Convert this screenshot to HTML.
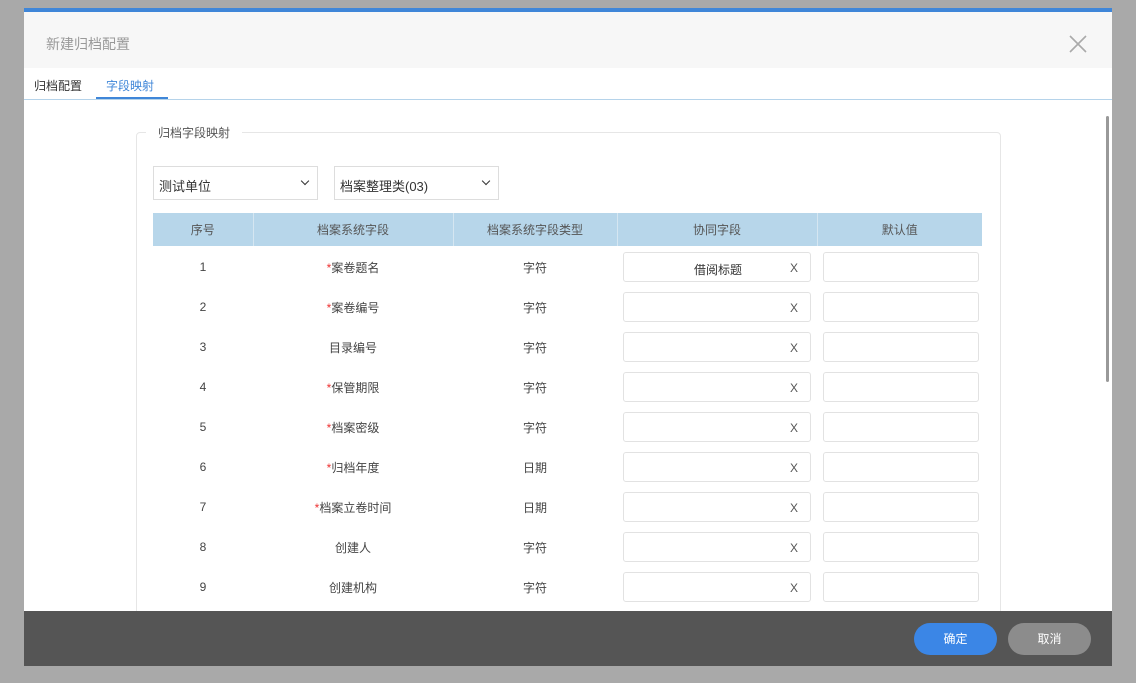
<!DOCTYPE html>
<html><head><meta charset="utf-8"><style>
*{box-sizing:border-box;margin:0;padding:0}
body{width:1136px;height:683px;background:#a9a9a9;font-family:"Liberation Sans","Noto Sans CJK SC",sans-serif;position:relative;overflow:hidden}
.dlg{position:absolute;left:24px;top:8px;width:1088px;height:658px;background:#fff;border-top:4px solid #3f86d8;overflow:hidden}
.hdr{height:56px;background:#f7f7f7;padding:22px 0 0 22px;font-size:14px;color:#999}
.close{position:absolute;right:24px;top:22px;width:20px;height:20px}
.tabs{height:32px;border-bottom:1px solid #b5d3ea;position:relative;font-size:12px}
.tabs span{position:absolute;top:9px}
.foot{position:absolute;left:0;bottom:0;width:100%;height:55px;background:#555}
.btn{position:absolute;top:12px;height:32px;width:83px;border-radius:16px;color:#fff;font-size:12px;text-align:center;line-height:32px}
.box{position:absolute;left:112px;top:120px;width:865px;height:520px;border:1px solid #e6e6e6;border-radius:4px}
.legend{position:absolute;left:122px;top:112px;background:#fff;padding:0 12px;font-size:12px;color:#555}
.sel{position:absolute;top:154px;height:34px;border:1px solid #ddd;font-size:13px;color:#333;padding:9px 5px}
.sel i{position:absolute;right:9px;top:11px;width:6px;height:6px;border-right:1.8px solid #333;border-bottom:1.8px solid #333;transform:rotate(45deg)}
table{position:absolute;left:129px;top:201px;border-collapse:collapse;font-size:12px;color:#444}
th{background:#b7d6ea;height:33px;font-weight:normal;border-right:1px solid #d5e6f1;color:#555}
td{height:40px;text-align:center;position:relative;padding-top:2px}
.r{color:#e33}
.in{position:absolute;top:6px;height:30px;border:1px solid #e2e2e2;border-radius:3px;background:#fff}
.in1{left:6px;width:188px}.in2{left:6px;width:156px}
.in1 b{position:absolute;right:12px;top:8px;font-weight:normal;color:#555}
.in1 em{position:absolute;left:70px;top:8px;font-style:normal;color:#333}
.scroll{position:absolute;right:3px;top:104px;width:3px;height:266px;background:#999;border-radius:2px}
</style></head><body>
<div class="dlg">
<div class="hdr">新建归档配置</div>
<svg class="close" viewBox="0 0 20 20"><path d="M2 2L18 18M18 2L2 18" stroke="#aaa" stroke-width="1.6"/></svg>
<div class="tabs"><span style="left:10px;color:#333">归档配置</span><span style="left:82px;color:#3f86d8">字段映射</span><div style="position:absolute;left:72px;top:29px;width:72px;height:2px;background:#3f86d8"></div></div>
<div class="scroll"></div>
<div class="box"></div>
<div class="legend">归档字段映射</div>
<div class="sel" style="left:129px;width:165px">测试单位<i></i></div>
<div class="sel" style="left:310px;width:165px">档案整理类(03)<i></i></div>
<table>
<tr><th style="width:100px">序号</th><th style="width:200px">档案系统字段</th><th style="width:164px">档案系统字段类型</th><th style="width:200px">协同字段</th><th style="width:165px;border-right:0">默认值</th></tr>
<tr><td>1</td><td><span class="r">*</span>案卷题名</td><td>字符</td><td><div class="in in1"><em>借阅标题</em><b>X</b></div></td><td><div class="in in2"></div></td></tr>
<tr><td>2</td><td><span class="r">*</span>案卷编号</td><td>字符</td><td><div class="in in1"><b>X</b></div></td><td><div class="in in2"></div></td></tr>
<tr><td>3</td><td>目录编号</td><td>字符</td><td><div class="in in1"><b>X</b></div></td><td><div class="in in2"></div></td></tr>
<tr><td>4</td><td><span class="r">*</span>保管期限</td><td>字符</td><td><div class="in in1"><b>X</b></div></td><td><div class="in in2"></div></td></tr>
<tr><td>5</td><td><span class="r">*</span>档案密级</td><td>字符</td><td><div class="in in1"><b>X</b></div></td><td><div class="in in2"></div></td></tr>
<tr><td>6</td><td><span class="r">*</span>归档年度</td><td>日期</td><td><div class="in in1"><b>X</b></div></td><td><div class="in in2"></div></td></tr>
<tr><td>7</td><td><span class="r">*</span>档案立卷时间</td><td>日期</td><td><div class="in in1"><b>X</b></div></td><td><div class="in in2"></div></td></tr>
<tr><td>8</td><td>创建人</td><td>字符</td><td><div class="in in1"><b>X</b></div></td><td><div class="in in2"></div></td></tr>
<tr><td>9</td><td>创建机构</td><td>字符</td><td><div class="in in1"><b>X</b></div></td><td><div class="in in2"></div></td></tr>
</table>
<div class="foot"><div class="btn" style="left:890px;background:#3b86e6">确定</div><div class="btn" style="left:984px;background:#8c8c8c">取消</div></div>
</div>
</body></html>
